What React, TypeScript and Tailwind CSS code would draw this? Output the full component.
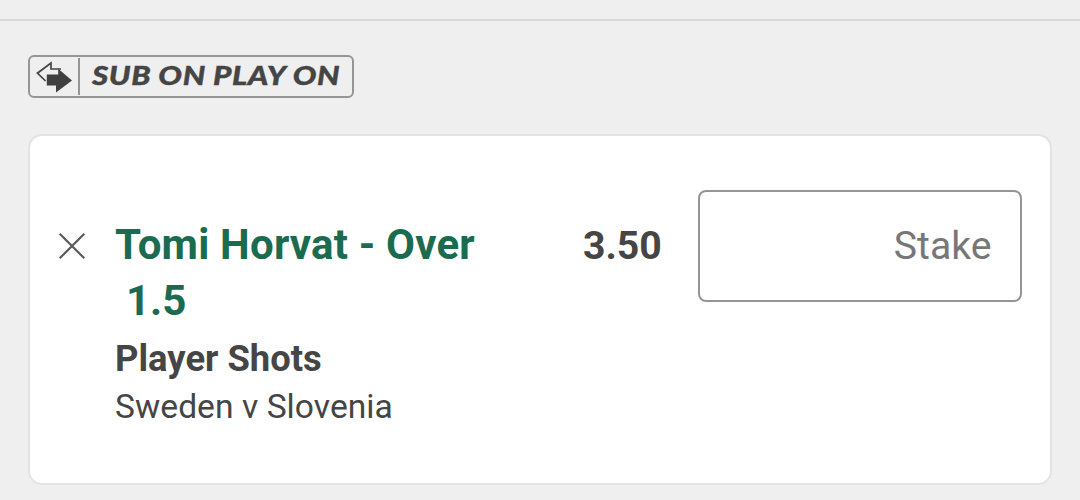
import { useState } from "react";

interface Selection {
  name: string;
  line: string;
  market: string;
  fixture: string;
  odds: string;
}

const selection: Selection = {
  name: "Tomi Horvat - Over",
  line: "1.5",
  market: "Player Shots",
  fixture: "Sweden v Slovenia",
  odds: "3.50",
};

function SubIcon() {
  return (
    <svg width="38" height="34" viewBox="0 0 38 34" className="shrink-0">
      <path d="M26 9H16V3L2.4 13.2L10.6 21" fill="none" stroke="#454545" strokeWidth="1.7" />
      <path d="M11.8 14.6H23.2V8.8L37 20.4L21 32.4V25.6H11.8Z" fill="#404040" />
    </svg>
  );
}

function PromoBadge() {
  return (
    <div className="flex h-[43px] w-[326px] items-center rounded-md border-2 border-[#959595] text-[#454545]">
      <div className="flex w-[48px] shrink-0 items-center pl-[5px]">
        <SubIcon />
      </div>
      <div className="h-[37px] w-[2px] shrink-0 bg-[#959595]" />
      <span className="mb-[4px] ml-[12px] origin-left scale-x-[1.16] whitespace-nowrap font-['Lato',sans-serif] text-[27px] font-black italic leading-[36px] tracking-[0.5px] [-webkit-text-stroke:0.4px_#454545]">
        SUB ON PLAY ON
      </span>
    </div>
  );
}

function BetCard({ bet }: { bet: Selection }) {
  const [stake, setStake] = useState("");

  return (
    <div className="flex h-[351px] items-start rounded-[14px] border-2 border-[#e3e3e3] bg-white px-7 pt-[54px]">
      <button aria-label="Remove selection" className="mt-[42px] shrink-0">
        <svg width="28" height="28" viewBox="0 0 28 28" stroke="#5c5c5c" strokeWidth="2.2">
          <path d="M1.7 1.7L26.3 26.3M26.3 1.7L1.7 26.3" />
        </svg>
      </button>

      {/* Selection details */}
      <div className="ml-[29px] mt-[27px] w-[468px] shrink-0 text-[#454545]">
        <div className="text-[42px] font-bold leading-[56px] text-[#1b6b50]">
          <div className="whitespace-nowrap tracking-[0.2px]">{bet.name}</div>
          <div className="pl-[11px]">{bet.line}</div>
        </div>
        <div className="mt-[6px] text-[36.4px] font-bold leading-[48px]">{bet.market}</div>
        <div className="text-[33.6px] leading-[48px] tracking-[0.05px]">{bet.fixture}</div>
      </div>

      <div className="mt-[32px] w-[115px] shrink-0 text-[39.2px] font-bold leading-[48px] text-[#454545]">{bet.odds}</div>

      <input
        value={stake}
        onChange={(e) => setStake(e.target.value)}
        placeholder="Stake"
        className="h-[112px] w-[324px] shrink-0 rounded-lg border-2 border-[#959595] px-[28.5px] text-right text-[39.2px] text-[#454545] outline-none placeholder:text-[#777777]"
      />
    </div>
  );
}

export default function App() {
  return (
    <div className="h-[500px] w-[1080px] overflow-hidden bg-[#efefef] font-['Roboto',sans-serif]">
      <div className="h-[21px] border-b-2 border-[#d8d8d8]" />
      <div className="px-7 pt-[34px]">
        <PromoBadge />
        <div className="mt-9">
          <BetCard bet={selection} />
        </div>
      </div>
    </div>
  );
}
